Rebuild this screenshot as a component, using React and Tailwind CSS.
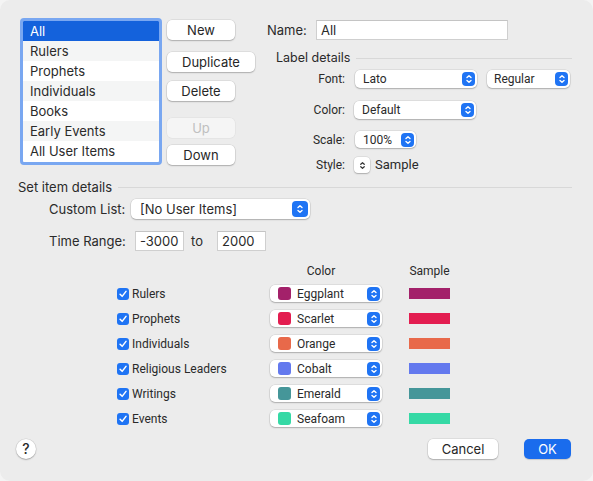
import React from 'react';

const items = ['All', 'Rulers', 'Prophets', 'Individuals', 'Books', 'Early Events', 'All User Items'];

const sets = [
    { name: 'Rulers', color: 'Eggplant', hex: '#a3216a' },
    { name: 'Prophets', color: 'Scarlet', hex: '#e31d50' },
    { name: 'Individuals', color: 'Orange', hex: '#e8694a' },
    { name: 'Religious Leaders', color: 'Cobalt', hex: '#6379ee' },
    { name: 'Writings', color: 'Emerald', hex: '#459699' },
    { name: 'Events', color: 'Seafoam', hex: '#35d9a5' },
];

// small-control text (mac "small" size)
const small = 'font-[Roboto,sans-serif] text-[12px]';

const Arrows = ({ color = 'white', size = 'w-[8px] h-[10px]' }) => (
    <svg viewBox="0 0 8 10" className={size} fill="none" stroke={color} strokeWidth="1.4" strokeLinecap="round" strokeLinejoin="round">
        <path d="M2 3.6 L4 1.8 L6 3.6" />
        <path d="M2 6.4 L4 8.2 L6 6.4" />
    </svg>
);

const Popup = ({ className = '', children, box = 'w-[13px] h-[14px]' }) => (
    <div className={`bg-white rounded-[5px] shadow-[0_0_0_0.5px_rgba(0,0,0,0.12),0_1px_1.5px_rgba(0,0,0,0.22)] flex items-center pr-[2px] ${className}`}>
        <div className="flex-1 flex items-center min-w-0 whitespace-nowrap">{children}</div>
        <div className={`bg-[#1f74f4] rounded-[4px] flex items-center justify-center ${box}`}>
            <Arrows />
        </div>
    </div>
);

const Button = ({ className = '', children, disabled }) => (
    <div
        className={`h-[20px] rounded-[5px] flex items-center justify-center ${
            disabled
                ? 'bg-[#f5f5f5] text-[#c0c0c0] shadow-[0_0_0_0.5px_rgba(0,0,0,0.06)]'
                : 'bg-white text-[#262626] shadow-[0_0_0_0.5px_rgba(0,0,0,0.12),0_1px_1.5px_rgba(0,0,0,0.22)]'
        } ${className}`}
    >
        {children}
    </div>
);

const Field = ({ className = '', children }) => (
    <div className={`h-[20px] bg-white border border-[#cfcfcf] border-t-[#c4c4c4] flex items-center pl-[4px] ${className}`}>
        {children}
    </div>
);

const Check = () => (
    <div className="w-[12px] h-[12px] rounded-[3px] bg-[#1f74f4] flex items-center justify-center">
        <svg viewBox="0 0 12 12" className="w-[10px] h-[10px]" fill="none" stroke="white" strokeWidth="1.8" strokeLinecap="round" strokeLinejoin="round">
            <path d="M2.5 6.3 L5 8.8 L9.6 2.8" />
        </svg>
    </div>
);

const App = () => {
    return (
        <div className="w-[593px] h-[481px] bg-[#f4f4f4] overflow-hidden" style={{ fontFamily: 'Inter, "Noto Sans", sans-serif' }}>
            <div className="w-[593px] h-[481px] bg-[#ececec] rounded-[10px] text-[13px] leading-[16px] text-[#2a2a2a] flex flex-col">
                {/* Top part */}
                <div className="flex pl-[20px] pt-[18px]">
                    <div className="w-[142px] h-[147px] rounded-[4px] border-[3px] border-[#79a7f1] bg-white overflow-hidden">
                        {items.map((item, i) => (
                            <div
                                key={item}
                                className={`h-[20px] flex items-center pl-[7px] ${
                                    i === 0 ? 'bg-[#1462dc] text-white' : i % 2 === 1 ? 'bg-[#f4f5f5]' : 'bg-white'
                                }`}
                            >
                                {item}
                            </div>
                        ))}
                    </div>

                    <div className="ml-[5px] w-[88px] flex flex-col">
                        <Button className="mt-[2px] w-[68px]">New</Button>
                        <Button className="mt-[12px] w-[88px]">Duplicate</Button>
                        <Button className="mt-[9px] w-[68px]">Delete</Button>
                        <Button className="mt-[17px] w-[68px]" disabled>Up</Button>
                        <Button className="mt-[7px] w-[68px]">Down</Button>
                    </div>

                    <div className="ml-[12px] w-[305px] flex flex-col">
                        <div className="mt-[2px] flex items-center h-[20px]">
                            <span className="w-[49px]">Name:</span>
                            <Field className="w-[192px]">All</Field>
                        </div>
                        <div className="mt-[10px] flex items-center h-[16px]">
                            <span className="ml-[9px] text-[12.5px]">Label details</span>
                            <div className="flex-1 h-px bg-[#d8d8d8] ml-[6px]" />
                        </div>
                        <div className={`mt-[4px] flex items-center h-[18px] ${small}`}>
                            <span className="w-[78px] text-right">Font:</span>
                            <Popup className="ml-[10px] w-[122px] h-[18px]"><span className="pl-[8px]">Lato</span></Popup>
                            <Popup className="ml-[10px] w-[83px] h-[18px]"><span className="pl-[7px]">Regular</span></Popup>
                        </div>
                        <div className={`mt-[13px] flex items-center h-[18px] ${small}`}>
                            <span className="w-[78px] text-right">Color:</span>
                            <Popup className="ml-[9px] w-[122px] h-[18px]"><span className="pl-[8px]">Default</span></Popup>
                        </div>
                        <div className={`mt-[12px] flex items-center h-[17px] ${small}`}>
                            <span className="w-[78px] text-right">Scale:</span>
                            <Popup className="ml-[10px] w-[61px] h-[17px]"><span className="pl-[8px]">100%</span></Popup>
                        </div>
                        <div className={`mt-[9px] flex items-center h-[16px] ${small}`}>
                            <span className="w-[78px] text-right">Style:</span>
                            <div className="ml-[9px] w-[16px] h-[16px] bg-white rounded-[4px] shadow-[0_0_0_0.5px_rgba(0,0,0,0.12),0_1px_1.5px_rgba(0,0,0,0.22)] flex items-center justify-center">
                                <Arrows color="#333" size="w-[7px] h-[9px]" />
                            </div>
                            <span className="ml-[5px] text-[13px]">Sample</span>
                        </div>
                    </div>
                </div>

                {/* Set item details */}
                <div className="mt-[6px] flex items-center h-[16px] pl-[18px] pr-[21px]">
                    <span>Set item details</span>
                    <div className="flex-1 h-px bg-[#d8d8d8] ml-[6px]" />
                </div>
                <div className="mt-[4px] flex items-center h-[20px] pl-[49px]">
                    <span className="w-[82px]">Custom List:</span>
                    <Popup className="w-[179px] h-[20px]" box="w-[16px] h-[16px]"><span className="pl-[9px]">[No User Items]</span></Popup>
                </div>
                <div className="mt-[12px] flex items-center h-[20px] pl-[49px]">
                    <span className="w-[86px]">Time Range:</span>
                    <Field className="w-[49px]">-3000</Field>
                    <span className="ml-[7px] w-[26px]">to</span>
                    <Field className="w-[49px]">2000</Field>
                </div>

                {/* Table header */}
                <div className={`mt-[13px] flex items-center h-[14px] pl-[270px] ${small}`}>
                    <div className="w-[112px] pr-[10px] text-center">Color</div>
                    <div className="ml-[27px] w-[41px] flex justify-center whitespace-nowrap">Sample</div>
                </div>

                <div className={`mt-[7px] flex flex-col gap-[8px] leading-[14px] ${small}`}>
                    {sets.map((s) => (
                        <div key={s.name} className="flex items-center h-[17px] pl-[117px]">
                            <Check />
                            <span className="ml-[3px] w-[138px]">{s.name}</span>
                            <Popup className="w-[112px] h-[17px]">
                                <div className="ml-[8px] w-[13px] h-[13px] rounded-[3px]" style={{ backgroundColor: s.hex }} />
                                <span className="ml-[6px]">{s.color}</span>
                            </Popup>
                            <div className="ml-[27px] w-[41px] h-[11px]" style={{ backgroundColor: s.hex }} />
                        </div>
                    ))}
                </div>

                {/* Footer */}
                <div className="mt-[12px] flex items-center h-[20px] pl-[16px] pr-[22px]">
                    <div className="w-[20px] h-[20px] rounded-full bg-white shadow-[0_0_0_0.5px_rgba(0,0,0,0.12),0_1px_1.5px_rgba(0,0,0,0.22)] flex items-center justify-center text-[14px] font-medium">
                        ?
                    </div>
                    <div className="flex-1" />
                    <Button className="w-[70px]">Cancel</Button>
                    <div className="ml-[26px] w-[47px] h-[20px] rounded-[5px] bg-[#1a6ced] text-white flex items-center justify-center shadow-[0_1px_1px_rgba(0,0,0,0.15)]">
                        OK
                    </div>
                </div>
            </div>
        </div>
    );
};

export default App;
